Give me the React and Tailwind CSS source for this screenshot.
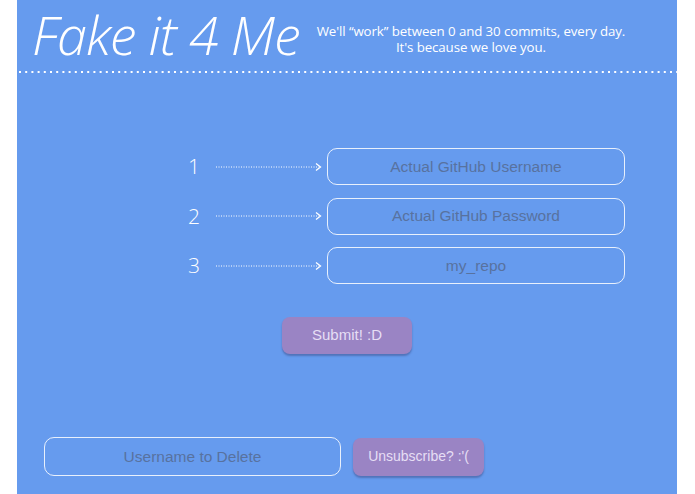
import React from 'react';

function Arrow() {
  return (
    <svg width="110" height="12" viewBox="0 0 110 12" className="shrink-0">
      <line x1="1" y1="6" x2="104" y2="6" stroke="white" strokeWidth="1" strokeDasharray="1 1.5" />
      <path d="M101 2.5 L105.5 6 L101 9.5" fill="none" stroke="white" strokeWidth="1.3" />
    </svg>
  );
}

function Field({ n, placeholder }) {
  return (
    <div className="flex items-center h-[37px]">
      <span className="w-[28px] pl-[1px] text-[21px] font-light text-white leading-none font-['Open_Sans',sans-serif]">{n}</span>
      <Arrow />
      <div className="ml-[2px] w-[298px] h-[37px] rounded-[10px] border-[1.5px] border-white/85 flex items-center justify-center text-[15.5px] text-[#58729f]">
        {placeholder}
      </div>
    </div>
  );
}

export default function App() {
  return (
    <div className="w-[695px] h-[494px] bg-white overflow-hidden" style={{ fontFamily: '"Liberation Sans", Arial, sans-serif' }}>
      <div className="ml-[17px] w-[660px] h-[494px] bg-[#669bee] flex flex-col">
        {/* Header */}
        <div className="flex items-center h-[68px] pl-[9px]">
          <h1 className="pl-[6px] pr-[6px] text-[54px] font-extralight italic text-white leading-[66px] tracking-[-1px] font-['Open_Sans',sans-serif]">
            Fake it 4 Me
          </h1>
          <div className="ml-[11px] mt-[10px] flex flex-col items-center text-[13.3px] text-white leading-[16px] tracking-[-0.1px] font-['Open_Sans',sans-serif]">
            <span>We'll “work” between 0 and 30 commits, every day.</span>
            <span>It's because we love you.</span>
          </div>
        </div>
        <svg width="660" height="4" className="block mt-[2px]">
          <line x1="2" y1="2" x2="660" y2="2" stroke="white" strokeWidth="2" strokeDasharray="2 4.2" />
        </svg>

        {/* Form */}
        <div className="flex flex-col gap-[12.5px] mt-[74px] ml-[170px]">
          <Field n="1" placeholder="Actual GitHub Username" />
          <Field n="2" placeholder="Actual GitHub Password" />
          <Field n="3" placeholder="my_repo" />
        </div>

        <button className="mt-[33px] ml-[265px] w-[130px] h-[37px] rounded-[8px] bg-[#9a84c4] text-[#e6def4] text-[15px] shadow-[0_2px_2px_rgba(40,40,90,0.35)]">
          Submit! :D
        </button>

        {/* Unsubscribe */}
        <div className="flex items-center mt-[83px] ml-[27px] gap-[12px]">
          <div className="w-[297px] h-[39px] rounded-[10px] border-[1.5px] border-white/85 flex items-center justify-center text-[15.5px] text-[#58729f]">
            Username to Delete
          </div>
          <button className="w-[131px] h-[38px] rounded-[8px] bg-[#9a84c4] text-[#e6def4] text-[14px] shadow-[0_2px_2px_rgba(40,40,90,0.35)]">
            Unsubscribe? :'(
          </button>
        </div>
      </div>
    </div>
  );
}
